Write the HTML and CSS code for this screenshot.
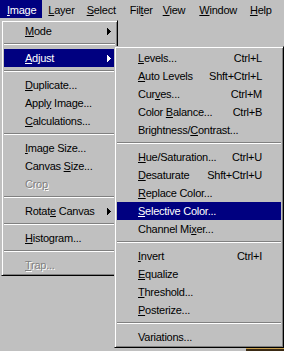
FILE: index.html
```html
<!DOCTYPE html>
<html>
<head>
<meta charset="utf-8">
<link rel="stylesheet" href="styles.css">
</head>
<body>
<div class="screen">
  <div class="menubar">
    <span class="mb-item first active"><u>I</u>mage</span>
    <span class="mb-item"><u>L</u>ayer</span>
    <span class="mb-item"><u>S</u>elect</span>
    <span class="mb-item filter">Fil<u>t</u>er</span>
    <span class="mb-item"><u>V</u>iew</span>
    <span class="mb-item window"><u>W</u>indow</span>
    <span class="mb-item help"><u>H</u>elp</span>
  </div>

  <div class="menu main">
    <div class="item"><span class="label"><u>M</u>ode</span><span class="arrow"><svg width="4" height="7" viewBox="0 0 4 7"><path d="M0 0h1v7h-1zM1 1h1v5h-1zM2 2h1v3h-1zM3 3h1v1h-1z"/></svg></span></div>
    <div class="sep"></div>
    <div class="item active"><span class="label"><u>A</u>djust</span><span class="arrow"><svg width="4" height="7" viewBox="0 0 4 7"><path d="M0 0h1v7h-1zM1 1h1v5h-1zM2 2h1v3h-1zM3 3h1v1h-1z"/></svg></span></div>
    <div class="sep"></div>
    <div class="item"><span class="label"><u>D</u>uplicate...</span></div>
    <div class="item"><span class="label">Appl<u>y</u> Image...</span></div>
    <div class="item"><span class="label"><u>C</u>alculations...</span></div>
    <div class="sep"></div>
    <div class="item"><span class="label"><u>I</u>mage Size...</span></div>
    <div class="item"><span class="label">Canvas <u>S</u>ize...</span></div>
    <div class="item disabled"><span class="label">Cro<u>p</u></span></div>
    <div class="sep"></div>
    <div class="item"><span class="label">Rotat<u>e</u> Canvas</span><span class="arrow"><svg width="4" height="7" viewBox="0 0 4 7"><path d="M0 0h1v7h-1zM1 1h1v5h-1zM2 2h1v3h-1zM3 3h1v1h-1z"/></svg></span></div>
    <div class="sep"></div>
    <div class="item"><span class="label"><u>H</u>istogram...</span></div>
    <div class="sep"></div>
    <div class="item disabled"><span class="label"><u>T</u>rap...</span></div>
  </div>

  <div class="menu sub">
    <div class="item"><span class="label"><u>L</u>evels...</span><span class="key">Ctrl+L</span></div>
    <div class="item"><span class="label"><u>A</u>uto Levels</span><span class="key">Shft+Ctrl+L</span></div>
    <div class="item"><span class="label">Cur<u>v</u>es...</span><span class="key">Ctrl+M</span></div>
    <div class="item"><span class="label">Color <u>B</u>alance...</span><span class="key">Ctrl+B</span></div>
    <div class="item"><span class="label">Brightness/<u>C</u>ontrast...</span></div>
    <div class="sep"></div>
    <div class="item"><span class="label"><u>H</u>ue/Saturation...</span><span class="key">Ctrl+U</span></div>
    <div class="item"><span class="label"><u>D</u>esaturate</span><span class="key">Shft+Ctrl+U</span></div>
    <div class="item"><span class="label"><u>R</u>eplace Color...</span></div>
    <div class="item active"><span class="label"><u>S</u>elective Color...</span></div>
    <div class="item"><span class="label">Channel Mi<u>x</u>er...</span></div>
    <div class="sep"></div>
    <div class="item"><span class="label"><u>I</u>nvert</span><span class="key">Ctrl+I</span></div>
    <div class="item"><span class="label"><u>E</u>qualize</span></div>
    <div class="item"><span class="label"><u>T</u>hreshold...</span></div>
    <div class="item"><span class="label"><u>P</u>osterize...</span></div>
    <div class="sep"></div>
    <div class="item"><span class="label">Variations...</span></div>
  </div>

  <div class="canvas-peek"></div>
</div>
</body>
</html>
```

FILE: styles.css
```css
html, body {
  margin: 0;
  padding: 0;
  background: #c0c0c0;
}

.screen {
  position: relative;
  width: 284px;
  height: 351px;
  overflow: hidden;
  background: #c0c0c0;
  font-family: "Liberation Sans", Arial, sans-serif;
  font-size: 11px;
  letter-spacing: -0.25px;
  color: #000;
}

u {
  text-decoration: underline;
  text-underline-offset: 1px;
}

/* ---------- menu bar ---------- */
.menubar {
  display: flex;
  height: 18px;
  padding-bottom: 2px;
}

.mb-item {
  height: 15px;
  padding: 3px 6px 0 6px;
  line-height: 15px;
  white-space: nowrap;
}

.mb-item.first {
  padding-left: 7px;
}

.mb-item.filter {
  padding-left: 8px;
  padding-right: 4px;
}

.mb-item.window {
  padding-left: 8px;
}

.mb-item.help {
  padding-left: 7px;
}

.mb-item.active {
  background: #000080;
  color: #fff;
}

/* ---------- menus ---------- */
.menu {
  box-sizing: border-box;
  border: 1px solid;
  border-color: #c0c0c0 #000 #000 #c0c0c0;
  box-shadow: inset 1px 1px 0 #fff, inset -1px -1px 0 #808080;
  background: #c0c0c0;
}

.main {
  width: 117px;
  margin-left: 1px;
  padding: 1px 2px;
}

.sub {
  position: absolute;
  left: 114px;
  top: 46px;
  width: 170px;
  padding: 2px 2px 1px 2px;
}

.item {
  display: flex;
  align-items: center;
  height: 18px;
  line-height: 18px;
  padding-left: 21px;
  white-space: nowrap;
}

.main .item {
  padding-right: 4px;
}

.sub .item {
  padding-right: 19px;
}

.item .label {
  flex: 1;
}

.item .key {
  text-align: right;
}

.item .arrow {
  display: flex;
  width: 4px;
  height: 7px;
}

.item .arrow svg {
  display: block;
  fill: #000;
  shape-rendering: crispEdges;
}

.item.active {
  background: #000080;
  color: #fff;
}

.item.active .arrow svg {
  fill: #fff;
}

.item.disabled {
  color: #808080;
  text-shadow: 1px 1px 0 #fff;
}

.sep {
  height: 9px;
  box-sizing: border-box;
  padding-top: 3px;
}

.sep::after {
  content: "";
  display: block;
  border-top: 1px solid #808080;
  border-bottom: 1px solid #fff;
}

/* sliver of the document window behind the menus */
.canvas-peek {
  position: absolute;
  left: 246px;
  top: 348px;
  width: 38px;
  height: 3px;
  background: #3a2a14;
  border-top: 1px solid #c8a050;
  box-sizing: border-box;
}
```
